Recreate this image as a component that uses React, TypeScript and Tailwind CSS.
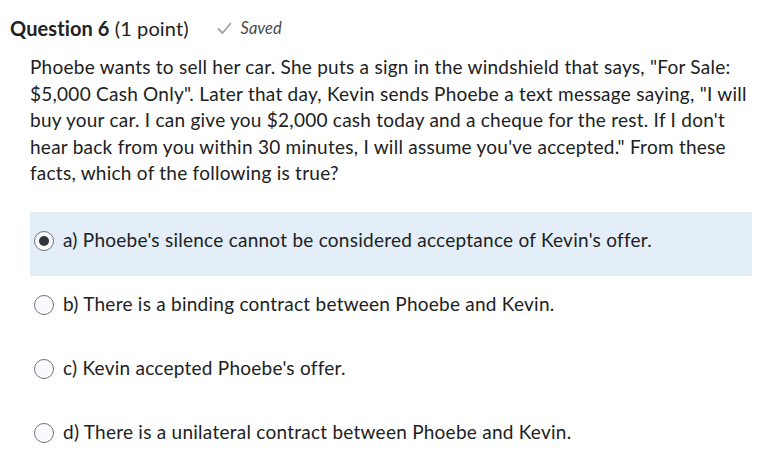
import React, { useState } from 'react';

const options = [
  { key: 'a', label: "a) Phoebe's silence cannot be considered acceptance of Kevin's offer." },
  { key: 'b', label: 'b) There is a binding contract between Phoebe and Kevin.' },
  { key: 'c', label: "c) Kevin accepted Phoebe's offer." },
  { key: 'd', label: 'd) There is a unilateral contract between Phoebe and Kevin.' },
];

const Radio: React.FC<{ checked: boolean }> = ({ checked }) => (
  <span className="flex h-[20px] w-[20px] shrink-0 items-center justify-center rounded-full border border-[#6f7378] bg-[#f9fafe]">
    {checked && <span className="h-[10px] w-[10px] rounded-full bg-[#313539]" />}
  </span>
);

export default function App() {
  const [selected, setSelected] = useState('a');

  return (
    <div
      className="h-[464px] w-[768px] overflow-hidden bg-white text-[#202122]"
      style={{ fontFamily: 'Lato, "Noto Sans", sans-serif' }}
    >
      {/* Header */}
      <div className="flex items-center pl-[10px] pt-[15px]">
        <h2 className="text-[20px] leading-[26px] tracking-[0.1px]">
          <span className="font-bold">Question 6</span> (1 point)
        </h2>
        <div className="ml-[28px] flex items-center gap-[9px] text-[#494c4e]">
          <svg width="15" height="13" viewBox="0 0 15 13" className="mt-[1px]">
            <path d="M1.5 7 L5.5 11 L13.5 1.5" fill="none" stroke="#a0a4a8" strokeWidth="1.8" strokeLinecap="round" strokeLinejoin="round" />
          </svg>
          <span className="text-[16.5px] italic leading-[20px]">Saved</span>
        </div>
      </div>

      {/* Question body */}
      <p className="mt-[13px] pl-[30px] pr-[20px] text-[19px] leading-[26.5px] tracking-[0.25px]">
        Phoebe wants to sell her car. She puts a sign in the windshield that says, "For Sale: $5,000 Cash Only". Later that day, Kevin sends Phoebe a text message saying, "I will buy your car. I can give you $2,000 cash today and a cheque for the rest. If I don't hear back from you within 30 minutes, I will assume you've accepted." From these facts, which of the following is true?
      </p>

      {/* Options */}
      <div className="ml-[30px] mr-[16px] mt-[25px] flex flex-col">
        {options.map((o) => (
          <button
            key={o.key}
            onClick={() => setSelected(o.key)}
            className={`flex h-[64px] items-center gap-[9px] pb-[6px] pl-[4px] text-left text-[19px] tracking-[0.25px] ${
              selected === o.key ? 'bg-[#e3eef9]' : 'bg-white'
            }`}
          >
            <Radio checked={selected === o.key} />
            <span>{o.label}</span>
          </button>
        ))}
      </div>
    </div>
  );
}
